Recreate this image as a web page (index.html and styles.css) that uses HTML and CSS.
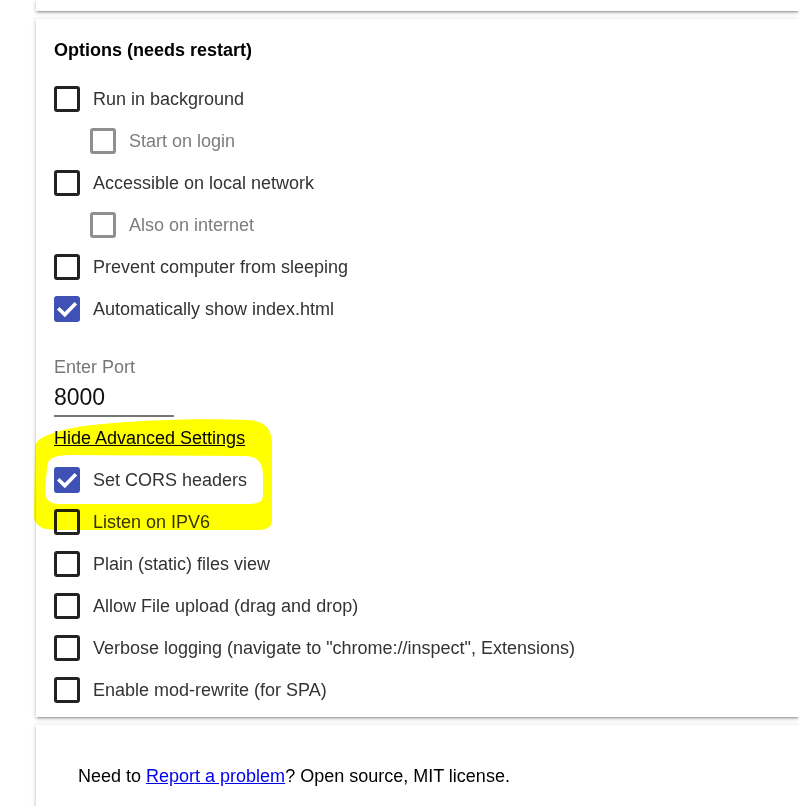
FILE: index.html
```html
<!DOCTYPE html>
<html>
<head>
<meta charset="utf-8">
<link rel="stylesheet" href="styles.css">
</head>
<body>
<div class="page">
  <div class="card card-top"></div>

  <div class="card card-options">
    <h3 class="title">Options (needs restart)</h3>
    <div class="rows">
      <div class="row"><span class="box"></span><span class="label">Run in background</span></div>
      <div class="row sub disabled"><span class="box"></span><span class="label">Start on login</span></div>
      <div class="row"><span class="box"></span><span class="label">Accessible on local network</span></div>
      <div class="row sub disabled"><span class="box"></span><span class="label">Also on internet</span></div>
      <div class="row"><span class="box"></span><span class="label">Prevent computer from sleeping</span></div>
      <div class="row"><span class="box checked"><svg viewBox="0 0 26 26" width="26" height="26"><path d="M5.5 13.5 L10.8 18.6 L20.6 8.6" fill="none" stroke="#fff" stroke-width="3.6" stroke-linecap="square"/></svg></span><span class="label">Automatically show index.html</span></div>
    </div>

    <div class="field">
      <div class="field-label">Enter Port</div>
      <div class="field-input">8000</div>
    </div>

    <a class="adv-link" href="#">Hide Advanced Settings</a>

    <div class="rows rows-adv">
      <div class="row"><span class="box checked"><svg viewBox="0 0 26 26" width="26" height="26"><path d="M5.5 13.5 L10.8 18.6 L20.6 8.6" fill="none" stroke="#fff" stroke-width="3.6" stroke-linecap="square"/></svg></span><span class="label">Set CORS headers</span></div>
      <div class="row"><span class="box"></span><span class="label">Listen on IPV6</span></div>
      <div class="row"><span class="box"></span><span class="label">Plain (static) files view</span></div>
      <div class="row"><span class="box"></span><span class="label">Allow File upload (drag and drop)</span></div>
      <div class="row"><span class="box"></span><span class="label">Verbose logging (navigate to "chrome://inspect", Extensions)</span></div>
      <div class="row"><span class="box"></span><span class="label">Enable mod-rewrite (for SPA)</span></div>
    </div>
  </div>

  <div class="card card-footer">
    <p class="footer-text">Need to <a href="#" class="report">Report a problem</a>? Open source, MIT license.</p>
  </div>

  <svg class="highlight" viewBox="30 415 246 120" width="246" height="120">
    <path fill="#ffff00" fill-rule="evenodd" d="M35 447 C35 437 58 430 84 426 C130 420 200 418 248 420 C266 421 272 429 272 445 L272 520 C272 528 266 530 256 530 L58 530 C44 530 34 527 34 515 Z M47 468 C47 458 55 455 70 455 L244 456 C258 456 263 463 263 476 L263 494 C263 502 258 504 249 504 L60 504 C50 504 45 500 45 490 Z"/>
  </svg>
</div>
</body>
</html>
```

FILE: styles.css
```css
html, body {
  margin: 0;
  padding: 0;
  overflow: hidden;
  background: #fff;
}

body {
  font-family: "Liberation Sans", Arial, sans-serif;
  font-size: 18px;
  color: #333;
}

.page {
  position: relative;
  box-sizing: border-box;
  padding-left: 36px;
  width: 100%;
}

.card {
  background: #fff;
  box-shadow: 0 2px 2px 0 rgba(0,0,0,.14), 0 3px 1px -2px rgba(0,0,0,.12), 0 1px 5px 0 rgba(0,0,0,.2);
  margin-bottom: 8px;
}

.card-top {
  height: 11px;
}

.card-options {
  padding: 21px 18px 6px 18px;
}

.title {
  margin: 0;
  font-size: 18px;
  line-height: 20px;
  font-weight: bold;
  color: #000;
}

.rows {
  display: flex;
  flex-direction: column;
  margin-top: 18px;
}

.row {
  display: flex;
  align-items: center;
  gap: 13px;
  height: 42px;
  line-height: 20px;
}

.row.sub {
  padding-left: 36px;
}

.box {
  box-sizing: border-box;
  width: 26px;
  height: 26px;
  border: 3px solid #222;
  border-radius: 3px;
  flex: none;
  position: relative;
}

.box.checked {
  border: none;
  background: #3f51b5;
}

.box svg {
  display: block;
}

.disabled .box {
  border-color: #8f8f8f;
}

.disabled .label {
  color: #7d7d7d;
}

.field {
  margin-top: 27px;
  width: 120px;
}

.field-label {
  line-height: 20px;
  color: #777;
}

.field-input {
  font-size: 23px;
  line-height: 38px;
  padding-top: 1px;
  height: 37px;
  color: #111;
  border-bottom: 2px solid #757575;
}

.adv-link {
  display: block;
  width: max-content;
  margin-top: 11px;
  line-height: 20px;
  color: #000;
  text-decoration: underline;
}

.rows-adv {
  margin-top: 11px;
}

.card-footer {
  padding: 41px 42px 40px 42px;
}

.footer-text {
  margin: 0;
  line-height: 20px;
  color: #000;
}

.report {
  color: #0000ee;
}

.highlight {
  position: absolute;
  left: 30px;
  top: 415px;
  mix-blend-mode: multiply;
  pointer-events: none;
}
```
